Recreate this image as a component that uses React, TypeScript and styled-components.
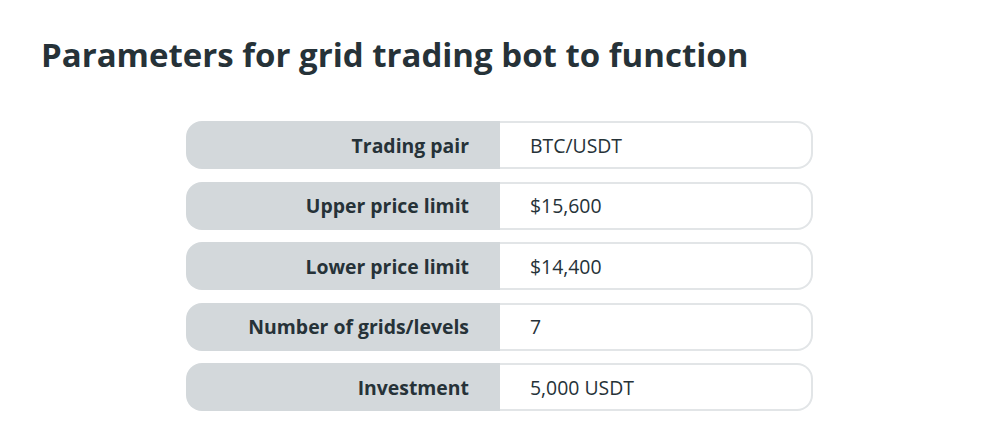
import React from "react";
import styled, { createGlobalStyle } from "styled-components";

const Global = createGlobalStyle`
  html, body { margin: 0; padding: 0; background: #ffffff; }
  body { font-family: "Open Sans", "Noto Sans", sans-serif; color: #263238; }
`;

const Page = styled.div`
  width: 1000px;
  height: 444px;
  box-sizing: border-box;
  padding: 33px 0 0 41px;
  display: flex;
  flex-direction: column;
`;

const Title = styled.h2`
  margin: 0;
  font-size: 33px;
  line-height: 44px;
  font-weight: 700;
  color: #263238;
  letter-spacing: 0;
`;

const Table = styled.div`
  margin: 44px 0 0 145px;
  width: 627px;
  display: flex;
  flex-direction: column;
  gap: 12.5px;
`;

const Row = styled.div`
  display: grid;
  grid-template-columns: 314px 1fr;
  height: 48px;
`;

const Label = styled.div`
  background: #d3d8db;
  border-radius: 16px 0 0 16px;
  display: flex;
  align-items: center;
  justify-content: flex-end;
  padding-right: 31px;
  font-size: 19.4px;
  font-weight: 700;
  color: #263238;
`;

const Value = styled.div`
  display: flex;
  align-items: center;
  padding-left: 30px;
  border: 2px solid #e2e5e7;
  border-left: none;
  border-radius: 0 16px 16px 0;
  font-size: 19.4px;
  font-weight: 400;
  color: #263238;
`;

const rows: [string, string][] = [
  ["Trading pair", "BTC/USDT"],
  ["Upper price limit", "$15,600"],
  ["Lower price limit", "$14,400"],
  ["Number of grids/levels", "7"],
  ["Investment", "5,000 USDT"],
];

export default function App() {
  return (
    <>
      <Global />
      <Page>
        <Title>Parameters for grid trading bot to function</Title>
        <Table>
          {rows.map(([k, v]) => (
            <Row key={k}>
              <Label>{k}</Label>
              <Value>{v}</Value>
            </Row>
          ))}
        </Table>
      </Page>
    </>
  );
}
